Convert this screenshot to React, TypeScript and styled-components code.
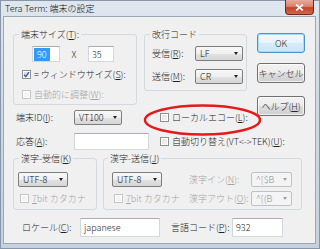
import styled, { createGlobalStyle } from 'styled-components'

const GlobalStyle = createGlobalStyle`
	html,
	body {
		margin: 0;
		padding: 0;
		background: #ffffff;
	}
	body {
		font-family: 'Noto Sans CJK JP', 'Noto Sans', sans-serif;
		font-size: 9px;
		font-weight: 300;
		color: #222;
	}
`

const Window = styled.div`
	position: relative;
	width: 320px;
	height: 249px;
	display: flex;
	flex-direction: column;
	background: linear-gradient(180deg, #dfe6ee 0%, #cfd9e4 40%, #c6d1dd 100%);
	box-shadow: inset 0 0 0 1px #8796a8;
	overflow: hidden;
`

const TitleBar = styled.div`
	height: 17px;
	flex-shrink: 0;
	display: flex;
	align-items: flex-start;
`

const TitleText = styled.span`
	padding-left: 5px;
	line-height: 17px;
	font-size: 9px;
	color: #111;
	white-space: nowrap;
`

const CloseButton = styled.div`
	margin-left: auto;
	margin-right: 6px;
	width: 29px;
	height: 15px;
	box-sizing: border-box;
	display: flex;
	align-items: center;
	justify-content: center;
	border: 1px solid #6b2b20;
	border-top: none;
	border-radius: 0 0 4px 4px;
	background: linear-gradient(180deg, #eaa99a 0%, #d8846e 45%, #c2432b 55%, #d4664a 100%);
`

const Client = styled.div`
	position: relative;
	flex: 1;
	min-height: 0;
	box-sizing: border-box;
	margin: 0 5px 6px 4px;
	padding: 12px 0 0 9px;
	background: #f0f0f0;
	box-shadow: 0 0 0 1px #9aa8b8;
`

const UpperSection = styled.div`
	display: flex;
	align-items: flex-start;
`

const LeftColumn = styled.div`
	width: 234px;
	display: flex;
	flex-direction: column;
`

const GroupsRow = styled.div`
	display: flex;
	align-items: flex-start;
	gap: 7px;
`

const GroupBox = styled.fieldset<{ $w: number; $h: number }>`
	box-sizing: border-box;
	width: ${(p) => p.$w}px;
	height: ${(p) => p.$h}px;
	min-width: 0;
	margin: 0;
	padding: 0;
	border: 1px solid #d2dae0;
	border-radius: 3px;
`

const Legend = styled.legend<{ $indent: number }>`
	margin-left: ${(p) => p.$indent}px;
	padding: 0 2px;
	font-size: 9px;
	line-height: 11px;
	white-space: nowrap;
`

const Key = styled.span`
	text-decoration: underline;
`

const SizeRow = styled.div`
	display: flex;
	align-items: center;
	margin-top: 6px;
	padding-left: 18px;
`

const Times = styled.span`
	width: 28px;
	text-align: center;
	font-size: 9px;
`

const TextBox = styled.div<{ $w: number; $h: number }>`
	box-sizing: border-box;
	width: ${(p) => p.$w}px;
	height: ${(p) => p.$h}px;
	display: flex;
	align-items: center;
	padding-left: 3px;
	background: #ffffff;
	border: 1px solid #d3d8de;
	border-top-color: #abadb3;
	font-size: 9px;
	white-space: nowrap;
`

const Selection = styled.span`
	margin-left: -2px;
	padding: 0 3px;
	height: 13px;
	line-height: 13px;
	background: #3399ff;
	color: #ffffff;
`

const CheckRow = styled.div<{ $top?: number; $left?: number; $disabled?: boolean }>`
	display: flex;
	align-items: center;
	gap: 3px;
	height: 11px;
	margin: ${(p) => p.$top ?? 0}px 0 0 ${(p) => p.$left ?? 0}px;
	color: ${(p) => (p.$disabled ? '#a3a3a3' : '#222')};
	font-size: 9px;
	white-space: nowrap;
`

const CheckBox = styled.span<{ $disabled?: boolean; $checked?: boolean }>`
	box-sizing: border-box;
	width: 9px;
	height: 9px;
	flex-shrink: 0;
	display: flex;
	align-items: center;
	justify-content: center;
	border: 1px solid ${(p) => (p.$disabled ? '#c6c6c6' : '#8e8f8f')};
	background: ${(p) =>
		p.$disabled
			? '#f4f4f4'
			: p.$checked
			? 'linear-gradient(135deg, #c9d6ea 0%, #eef3fa 100%)'
			: 'linear-gradient(135deg, #dcdcdc 0%, #fbfbfb 100%)'};
	box-shadow: inset 0 0 0 1px #ffffff;
`

const ComboRow = styled.div<{ $top: number }>`
	display: flex;
	align-items: center;
	margin-top: ${(p) => p.$top}px;
	padding-left: 7px;
`

const Label = styled.span<{ $w?: number; $gap?: number; $disabled?: boolean }>`
	width: ${(p) => (p.$w ? `${p.$w}px` : 'auto')};
	margin-left: ${(p) => p.$gap ?? 0}px;
	flex-shrink: 0;
	color: ${(p) => (p.$disabled ? '#a3a3a3' : '#222')};
	font-size: 9px;
	white-space: nowrap;
`

const Combo = styled.div<{ $w: number; $disabled?: boolean }>`
	box-sizing: border-box;
	width: ${(p) => p.$w}px;
	height: 15px;
	display: flex;
	align-items: center;
	justify-content: space-between;
	padding: 0 4px;
	border: 1px solid ${(p) => (p.$disabled ? '#bcc1c5' : '#7d7d7d')};
	border-radius: 2px;
	background: ${(p) =>
		p.$disabled
			? '#f4f4f4'
			: 'linear-gradient(180deg, #f8f8f8 0%, #efefef 50%, #e2e2e2 51%, #d6d6d6 100%)'};
	color: ${(p) => (p.$disabled ? '#8c8c8c' : '#111')};
	font-size: 9px;
	white-space: nowrap;
`

const Arrow = styled.span<{ $disabled?: boolean }>`
	width: 0;
	height: 0;
	border-left: 2.5px solid transparent;
	border-right: 2.5px solid transparent;
	border-top: 3px solid ${(p) => (p.$disabled ? '#a0a0a0' : '#222')};
`

const ButtonColumn = styled.div`
	display: flex;
	flex-direction: column;
	margin: 4px 0 0 10px;
`

const Button = styled.div<{ $primary?: boolean; $top: number }>`
	box-sizing: border-box;
	width: 48px;
	height: 20px;
	margin-top: ${(p) => p.$top}px;
	display: flex;
	align-items: center;
	justify-content: center;
	border: 1px solid ${(p) => (p.$primary ? '#4a94c9' : '#707070')};
	border-radius: 3px;
	background: ${(p) =>
		p.$primary
			? 'linear-gradient(180deg, #f4fafd 0%, #e6f3fb 50%, #d6ecf8 51%, #cbe6f6 100%)'
			: 'linear-gradient(180deg, #f2f2f2 0%, #ebebeb 50%, #dddddd 51%, #cfcfcf 100%)'};
	box-shadow: inset 0 0 0 1px ${(p) => (p.$primary ? '#a6dcf6' : 'rgba(255, 255, 255, 0.7)')};
	color: #222;
	font-size: 9px;
	white-space: nowrap;
`

const FieldRow = styled.div<{ $top: number; $h: number }>`
	display: grid;
	grid-template-columns: 58px 86px auto;
	align-items: center;
	height: ${(p) => p.$h}px;
	margin-top: ${(p) => p.$top}px;
	padding-left: 3px;
	white-space: nowrap;
`

const KanjiRow = styled.div`
	display: flex;
	gap: 6px;
	margin-top: 3px;
`

const KanjiGrid = styled.div<{ $cols: string; $left: number }>`
	display: grid;
	grid-template-columns: ${(p) => p.$cols};
	grid-template-rows: 15px 15px;
	row-gap: 4px;
	align-items: center;
	padding: 8px 0 0 ${(p) => p.$left}px;
`

const LocaleRow = styled.div`
	display: flex;
	align-items: center;
	height: 19px;
	margin-top: 8px;
	padding-left: 9px;
`

const Highlight = styled.svg`
	position: absolute;
	left: 138px;
	top: 86px;
	pointer-events: none;
`

const CheckMark = () => (
	<svg width="7" height="7" viewBox="0 0 7 7">
		<path d="M1 3.6 L2.8 5.6 L6 1.2" fill="none" stroke="#3b5a9c" strokeWidth="1.4" />
	</svg>
)

export default function App() {
	return (
		<>
			<GlobalStyle />
			<Window>
				<TitleBar>
					<TitleText>Tera Term: 端末の設定</TitleText>
					<CloseButton>
						<svg width="9" height="7" viewBox="0 0 9 7">
							<path d="M1.2 0.6 L7.8 6.4 M7.8 0.6 L1.2 6.4" stroke="#ffffff" strokeWidth="1.8" />
						</svg>
					</CloseButton>
				</TitleBar>
				<Client>
					<UpperSection>
						<LeftColumn>
							<GroupsRow>
								<GroupBox $w={124} $h={76}>
									<Legend $indent={5}>
										端末サイズ(<Key>T</Key>):
									</Legend>
									<SizeRow>
										<TextBox $w={28} $h={16}>
											<Selection>90</Selection>
										</TextBox>
										<Times>X</Times>
										<TextBox $w={26} $h={16}>
											35
										</TextBox>
									</SizeRow>
									<CheckRow $top={7} $left={8}>
										<CheckBox $checked>
											<CheckMark />
										</CheckBox>
										<span>
											= ウィンドウサイズ(<Key>S</Key>):
										</span>
									</CheckRow>
									<CheckRow $top={9} $left={8} $disabled>
										<CheckBox $disabled />
										<span>
											自動的に調整(<Key>W</Key>):
										</span>
									</CheckRow>
								</GroupBox>
								<GroupBox $w={103} $h={62}>
									<Legend $indent={5}>改行コード</Legend>
									<ComboRow $top={6}>
										<Label $w={43}>
											受信(<Key>R</Key>):
										</Label>
										<Combo $w={48}>
											LF
											<Arrow />
										</Combo>
									</ComboRow>
									<ComboRow $top={8}>
										<Label $w={43}>
											送信(<Key>M</Key>):
										</Label>
										<Combo $w={48}>
											CR
											<Arrow />
										</Combo>
									</ComboRow>
								</GroupBox>
							</GroupsRow>
							<FieldRow $top={5} $h={15}>
								<Label>
									端末ID(<Key>I</Key>):
								</Label>
								<Combo $w={48}>
									VT100
									<Arrow />
								</Combo>
								<CheckRow>
									<CheckBox />
									<span>
										ローカルエコー(<Key>L</Key>):
									</span>
								</CheckRow>
							</FieldRow>
						</LeftColumn>
						<ButtonColumn>
							<Button $primary $top={0}>
								OK
							</Button>
							<Button $top={10}>キャンセル</Button>
							<Button $top={13}>
								ヘルプ(<Key>H</Key>)
							</Button>
						</ButtonColumn>
					</UpperSection>
					<FieldRow $top={8} $h={17}>
						<Label>
							応答(<Key>A</Key>):
						</Label>
						<TextBox $w={75} $h={17} />
						<CheckRow>
							<CheckBox />
							<span>
								自動切り替え(VT&lt;-&gt;TEK)(<Key>U</Key>):
							</span>
						</CheckRow>
					</FieldRow>
					<KanjiRow>
						<GroupBox $w={84} $h={57}>
							<Legend $indent={5}>
								漢字-受信(<Key>K</Key>)
							</Legend>
							<KanjiGrid $cols="50px" $left={4}>
								<Combo $w={50}>
									UTF-8
									<Arrow />
								</Combo>
								<CheckRow $left={2} $disabled>
									<CheckBox $disabled />
									<span>
										<Key>7</Key>bit カタカナ
									</span>
								</CheckRow>
							</KanjiGrid>
						</GroupBox>
						<GroupBox $w={199} $h={57}>
							<Legend $indent={4}>
								漢字-送信(<Key>J</Key>)
							</Legend>
							<KanjiGrid $cols="77px 62px 41px" $left={8}>
								<Combo $w={50}>
									UTF-8
									<Arrow />
								</Combo>
								<Label $disabled>
									漢字イン(<Key>N</Key>):
								</Label>
								<Combo $w={41} $disabled>
									^[$B
									<Arrow $disabled />
								</Combo>
								<CheckRow $left={2} $disabled>
									<CheckBox $disabled />
									<span>
										<Key>7</Key>bit カタカナ
									</span>
								</CheckRow>
								<Label $disabled>
									漢字アウト(<Key>O</Key>):
								</Label>
								<Combo $w={41} $disabled>
									^[(B
									<Arrow $disabled />
								</Combo>
							</KanjiGrid>
						</GroupBox>
					</KanjiRow>
					<LocaleRow>
						<Label $w={58}>
							ロケール(<Key>C</Key>):
						</Label>
						<TextBox $w={80} $h={19}>
							japanese
						</TextBox>
						<Label $w={61} $gap={11}>
							言語コード(<Key>P</Key>):
						</Label>
						<TextBox $w={51} $h={19}>
							932
						</TextBox>
					</LocaleRow>
					<Highlight width="121" height="34" viewBox="0 0 121 34">
						<ellipse cx="60.5" cy="17" rx="57.5" ry="14.5" fill="none" stroke="#e3191c" strokeWidth="2.5" />
					</Highlight>
				</Client>
			</Window>
		</>
	)
}
